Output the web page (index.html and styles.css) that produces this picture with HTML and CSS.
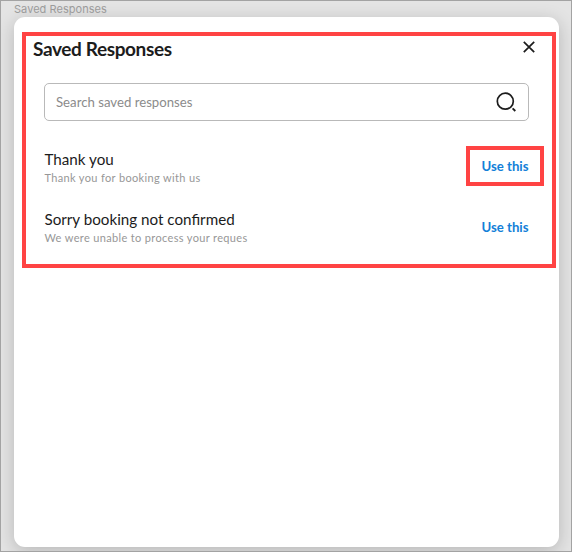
FILE: index.html
```
<!DOCTYPE html>
<html lang="en">
<head>
    <meta charset="UTF-8">
    <meta name="viewport" content="width=device-width, initial-scale=1.0">
    <title>Saved Responses</title>
    <link rel="stylesheet" href="styles.css">
</head>
<body>
    <div class="frame-label">Saved Responses</div>

    <div class="modal">
        <div class="panel">
            <div class="header">
                <h2>Saved Responses</h2>
                <button class="close-btn" aria-label="Close">
                    <svg width="12" height="12" viewBox="0 0 12 12">
                        <path d="M0.8 0.8L11.2 11.2M11.2 0.8L0.8 11.2" fill="none" stroke="#1c1c1c" stroke-width="1.7"/>
                    </svg>
                </button>
            </div>

            <div class="search">
                <input type="text" placeholder="Search saved responses">
                <svg width="20" height="20" viewBox="0 0 20 20">
                    <circle cx="9.3" cy="9.2" r="8" fill="none" stroke="#1c1c1c" stroke-width="1.7"/>
                    <path d="M16.6 16.4L19.3 19" fill="none" stroke="#1c1c1c" stroke-width="1.9"/>
                </svg>
            </div>

            <div class="response">
                <div class="response-text">
                    <h3>Thank you</h3>
                    <p>Thank you for booking with us</p>
                </div>
                <button class="use-btn marked">Use this</button>
            </div>
            <div class="response">
                <div class="response-text">
                    <h3>Sorry booking not confirmed</h3>
                    <p>We were unable to process your reques</p>
                </div>
                <button class="use-btn">Use this</button>
            </div>
        </div>
    </div>
</body>
</html>
```
FILE: styles.css
```
* {
    box-sizing: border-box;
}

html, body {
    margin: 0;
    padding: 0;
    height: 100%;
    overflow: hidden;
}

body {
    background: #e4e4e4;
    border: 1px solid #a3a3a3;
    padding: 0 12px 0 13px;
    font-family: Lato, sans-serif;
}

.frame-label {
    height: 16px;
    line-height: 16px;
    font-family: Inter, sans-serif;
    font-size: 11px;
    letter-spacing: 0.04px;
    color: #9b9b9b;
}

.modal {
    width: 545px;
    height: 530px;
    padding: 15px 3px 0 8px;
    background: #fff;
    border-radius: 11px;
    box-shadow: 0 4px 18px rgba(0, 0, 0, 0.2);
}

.panel {
    height: 236px;
    border: 4px solid #ff4343;
    padding: 0 23px 0 18px;
}

.header {
    display: flex;
    justify-content: space-between;
    height: 47px;
    margin: 0 -6px 0 -11px;
}

.header h2 {
    margin: 0;
    font-size: 19px;
    line-height: 26px;
    font-weight: 700;
    letter-spacing: -0.38px;
    color: #1c1c1c;
}

.close-btn {
    width: 12px;
    height: 12px;
    margin: 5px 0 0;
    padding: 0;
    border: none;
    background: none;
}

.close-btn svg,
.search svg {
    display: block;
}

.search {
    display: flex;
    align-items: center;
    justify-content: space-between;
    height: 38px;
    padding: 0 12px 0 11px;
    border: 1px solid #b9b9b9;
    border-radius: 5px;
}

.search input {
    width: 300px;
    padding: 0;
    border: none;
    outline: none;
    font-family: inherit;
    font-size: 13.2px;
}

.search input::placeholder {
    color: #8b8b8b;
}

.response {
    display: flex;
    align-items: center;
    justify-content: space-between;
    height: 40px;
    margin-top: 25px;
}

.response + .response {
    margin-top: 20.5px;
}

.response-text {
    padding: 2px 0 0 0.5px;
}

.response h3 {
    margin: 0;
    font-size: 15.2px;
    line-height: 20px;
    font-weight: 400;
    color: #1c1c1c;
}

.response p {
    margin: 0;
    font-size: 11px;
    line-height: 17px;
    letter-spacing: 0.35px;
    color: #979797;
}

.use-btn {
    width: 78px;
    height: 40px;
    margin-right: -15px;
    padding: 0;
    border: 4px solid transparent;
    background: none;
    font-family: inherit;
    font-size: 13.2px;
    font-weight: 700;
    color: #1380d8;
}

.use-btn.marked {
    border-color: #ff4343;
}
```
